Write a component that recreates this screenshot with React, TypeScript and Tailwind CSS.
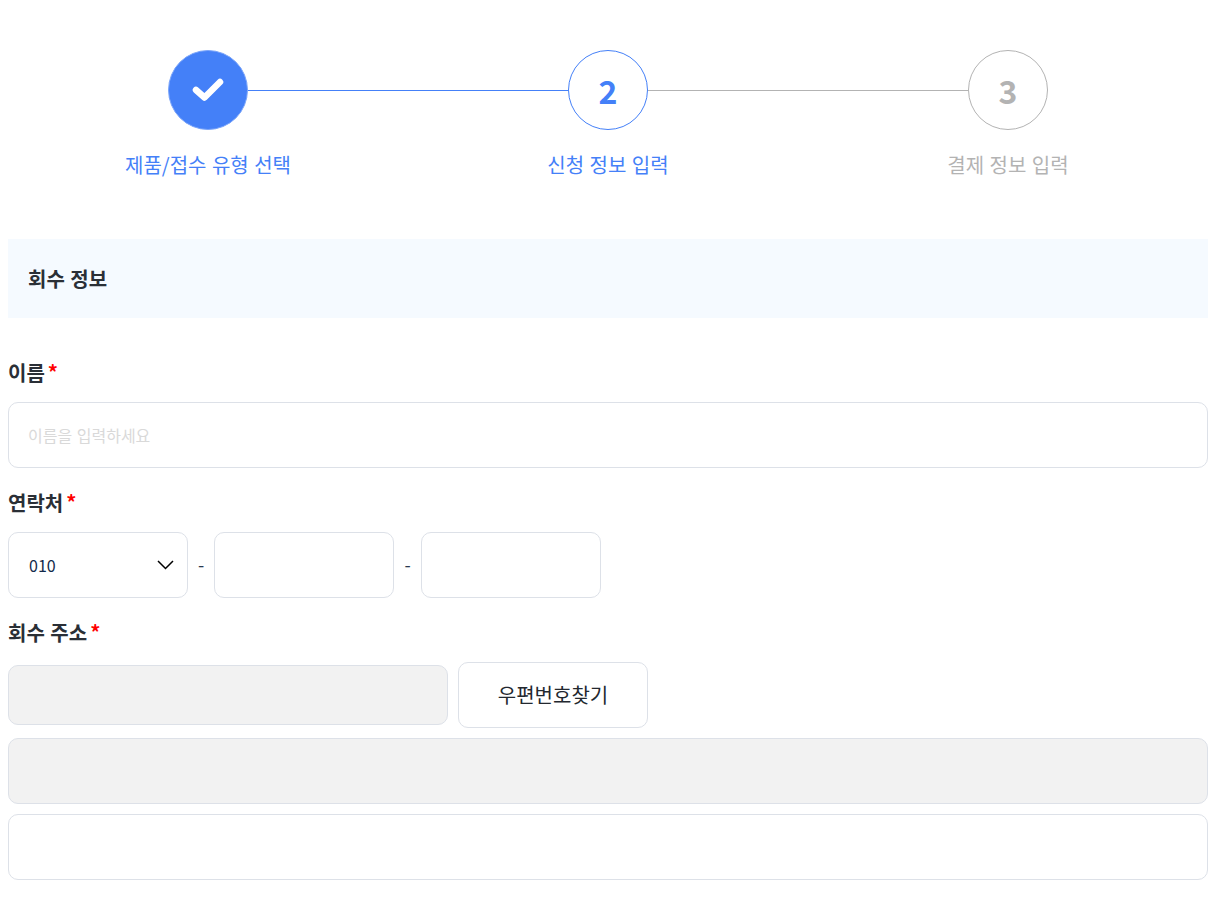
import React from "react";

const font = "font-['Noto_Sans_CJK_KR','Noto_Sans',sans-serif] [word-spacing:1px]";
const inputBox = "rounded-[10px] border border-[#dde1e8] px-5 outline-none";

const Label = ({ children, className = "" }: { children: React.ReactNode; className?: string }) => (
  <div className={`flex h-[26px] items-center text-[20px] font-bold leading-[26px] text-[#2a2f36] ${className}`}>
    <span>{children}</span>
    <span className="ml-[3px] -translate-y-px text-[#ff0000]">*</span>
  </div>
);

const App = () => {
  return (
    <div className={`min-h-[898px] bg-white px-2 pt-[50px] ${font}`}>
      <div className="w-[1200px]">
        <div className="flex items-center px-[160px]">
          <div className="flex size-20 items-center justify-center rounded-full border border-[#7ba5fa] bg-[#4480f8]">
            <svg width="34" height="26" viewBox="0 0 34 26" fill="none">
              <path d="M5 13L13.5 20.5L29 5" stroke="#fff" strokeWidth="6.5" strokeLinecap="round" strokeLinejoin="round" />
            </svg>
          </div>
          <div className="h-px flex-1 bg-[#4480f8]"></div>
          <div className="flex size-20 items-center justify-center rounded-full border border-[#4480f8] bg-white text-[32px] font-bold leading-none text-[#4480f8]">
            2
          </div>
          <div className="h-px flex-1 bg-[#b3b3b3]"></div>
          <div className="flex size-20 items-center justify-center rounded-full border border-[#b3b3b3] bg-white text-[32px] font-bold leading-none text-[#b3b3b3]">
            3
          </div>
        </div>
        <div className="mt-5 grid grid-cols-3 text-center text-[20px] leading-[30px]">
          <p className="text-[#4480f8]">제품/접수 유형 선택</p>
          <p className="text-[#4480f8]">신청 정보 입력</p>
          <p className="text-[#b3b3b3]">결제 정보 입력</p>
        </div>

        <div className="mt-[59px] flex h-[79px] items-center bg-[#f5faff] px-5 text-[20px] font-bold text-[#2a2f36]">
          회수 정보
        </div>

        <Label className="mt-[42px]">이름</Label>
        <input
          placeholder="이름을 입력하세요"
          className={`${inputBox} mt-[16px] block h-[66px] w-full bg-white !pl-[19px] text-[16px] [word-spacing:1px] placeholder:text-[#d9d9d9]`}
        />

        <Label className="mt-[22px]">연락처</Label>
        <div className="mt-[16px] flex items-center">
          <div className={`${inputBox} flex h-[66px] w-[180px] items-center justify-between bg-white !pr-[13px]`}>
            <span className="text-[16px] text-[#12294a]">010</span>
            <svg width="17" height="10" viewBox="0 0 17 10" fill="none">
              <path d="M1 1L8.5 8.5L16 1" stroke="#000" strokeWidth="1.5" />
            </svg>
          </div>
          <span className="w-[26px] -translate-y-px text-center text-[18px] text-[#2a3a50]">-</span>
          <input className={`${inputBox} h-[66px] w-[180px] bg-white`} />
          <span className="w-[27px] -translate-y-px text-center text-[18px] text-[#2a3a50]">-</span>
          <input className={`${inputBox} h-[66px] w-[180px] bg-white`} />
        </div>

        <Label className="mt-[22px]">회수 주소</Label>
        <div className="mt-[16px] flex items-center gap-[10px]">
          <input disabled className={`${inputBox} h-[60px] w-[440px] bg-[#f2f2f2]`} />
          <button className={`${inputBox} h-[66px] w-[190px] bg-white !px-0 text-[20px] text-[#23282f]`}>우편번호찾기</button>
        </div>
        <input disabled className={`${inputBox} mt-[10px] block h-[66px] w-full bg-[#f2f2f2]`} />
        <input className={`${inputBox} mt-[10px] block h-[66px] w-full bg-white`} />
      </div>
    </div>
  );
};

export default App;
